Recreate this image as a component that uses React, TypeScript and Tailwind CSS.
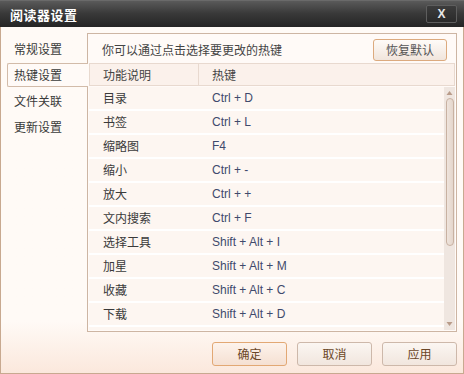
import React from "react";

const rows: [string, string][] = [
  ["目录", "Ctrl + D"],
  ["书签", "Ctrl + L"],
  ["缩略图", "F4"],
  ["缩小", "Ctrl + -"],
  ["放大", "Ctrl + +"],
  ["文内搜索", "Ctrl + F"],
  ["选择工具", "Shift + Alt + I"],
  ["加星", "Shift + Alt + M"],
  ["收藏", "Shift + Alt + C"],
  ["下载", "Shift + Alt + D"],
];

const tabs = ["常规设置", "热键设置", "文件关联", "更新设置"];

export default function App() {
  return (
    <div className="w-[464px] h-[374px] flex flex-col font-['Noto_Sans_CJK_SC',sans-serif] text-[12px] text-[#3a3a3a] overflow-hidden">
      {/* Title bar */}
      <div className="h-[27px] shrink-0 flex items-center justify-between bg-gradient-to-b from-[#5a5a5a] via-[#383838] to-[#252525] border-t border-[#6a6a6a] pl-[10px] pr-[7px]">
        <span className="text-white font-bold text-[13px] leading-none tracking-[0.5px]">阅读器设置</span>
        <div className="w-[31px] h-[18px] mt-[-1px] flex items-center justify-center rounded-[2px] border border-[#5e5e5e] bg-gradient-to-b from-[#3c3c3c] to-[#2a2a2a]">
          <span className="font-['Liberation_Sans',sans-serif] font-bold text-[12px] text-[#e8e8e8] leading-none">X</span>
        </div>
      </div>

      {/* Body */}
      <div className="flex-1 flex flex-col border-l border-r border-b border-[#c8a990] bg-gradient-to-b from-[#fffaf6] from-[85%] to-[#fbe8dc]">
        <div className="flex pt-[6px] pr-[6px]">
          {/* Sidebar */}
          <div className="w-[87px] shrink-0 -mr-px relative z-10 pl-[6px] pt-[4px] flex flex-col gap-[2px]">
            {tabs.map((t, i) =>
              i === 1 ? (
                <div
                  key={t}
                  className="h-[24px] w-[81px] flex items-center pl-[6px] bg-[#fffaf7] border-l border-t border-b border-[#d2bba9] rounded-l-[2px]"
                >
                  {t}
                </div>
              ) : (
                <div key={t} className="h-[24px] w-[81px] flex items-center pl-[7px]">
                  {t}
                </div>
              )
            )}
          </div>

          {/* Panel */}
          <div className="flex-1 h-[299px] border border-[#cdb5a3] bg-[#fffaf7] flex flex-col">
            <div className="flex items-center justify-between pl-[14px] pr-[9px] pt-[5px] pb-[2px]">
              <span className="text-[#444]">你可以通过点击选择要更改的热键</span>
              <div className="w-[74px] h-[22px] flex items-center justify-center rounded-[3px] border border-[#dcaa7e] bg-gradient-to-b from-[#fefbf8] to-[#f1e5dc] text-[#555]">
                恢复默认
              </div>
            </div>
            <div className="mx-[1px] flex flex-col">
              {/* table header */}
              <div className="h-[23px] flex border border-[#e8d9cf] bg-[#fbf1eb]">
                <div className="w-[109px] border-r border-[#e8d9cf] pl-[13px] flex items-center text-[#444]">功能说明</div>
                <div className="pl-[13px] flex items-center text-[#444]">热键</div>
              </div>
              <div className="h-[1px]" />
              <div className="flex h-[243px]">
                <div className="flex-1 flex flex-col">
                  {rows.map(([a, b]) => (
                    <div key={a} className="h-[24px] shrink-0 flex border-b-2 border-white bg-[#fdf6f1]">
                      <div className="w-[123px] pl-[14px] flex items-center text-[#3a3a3a]">{a}</div>
                      <div className="flex items-center font-['Liberation_Sans',sans-serif] text-[12px] text-[#3f4a6c]">{b}</div>
                    </div>
                  ))}
                  <div className="flex-1 bg-[#fdf6f1]" />
                </div>
                {/* scrollbar */}
                <div className="w-[11px] shrink-0 bg-[#efe6e0] flex flex-col items-center">
                  <svg width="7" height="6" viewBox="0 0 7 6" className="mt-[3px]">
                    <path d="M3.5 1 L6.5 5 L0.5 5 Z" fill="#b99c8a" />
                  </svg>
                  <div className="mt-[2px] w-[8px] h-[148px] rounded-full border border-[#c8b1a1] bg-gradient-to-r from-[#efe4dc] to-[#e4d6cc]" />
                  <div className="flex-1" />
                  <svg width="7" height="6" viewBox="0 0 7 6" className="mb-[3px]">
                    <path d="M0.5 1 L6.5 1 L3.5 5 Z" fill="#b99c8a" />
                  </svg>
                </div>
              </div>
            </div>
          </div>
        </div>

        {/* Footer buttons */}
        <div className="flex justify-end gap-[10px] pt-[10px] pr-[6px]">
          <div className="w-[75px] h-[24px] flex items-center justify-center rounded-[3px] border border-[#e2a874] bg-gradient-to-b from-[#fdf3ec] to-[#f5e0d2] text-[#6b4626]">
            确定
          </div>
          <div className="w-[75px] h-[24px] flex items-center justify-center rounded-[3px] border border-[#cdb8aa] bg-gradient-to-b from-[#fbf6f2] to-[#f1e6de] text-[#6b4626]">
            取消
          </div>
          <div className="w-[75px] h-[24px] flex items-center justify-center rounded-[3px] border border-[#cdb8aa] bg-gradient-to-b from-[#fbf6f2] to-[#f1e6de] text-[#6b4626]">
            应用
          </div>
        </div>
      </div>
    </div>
  );
}
